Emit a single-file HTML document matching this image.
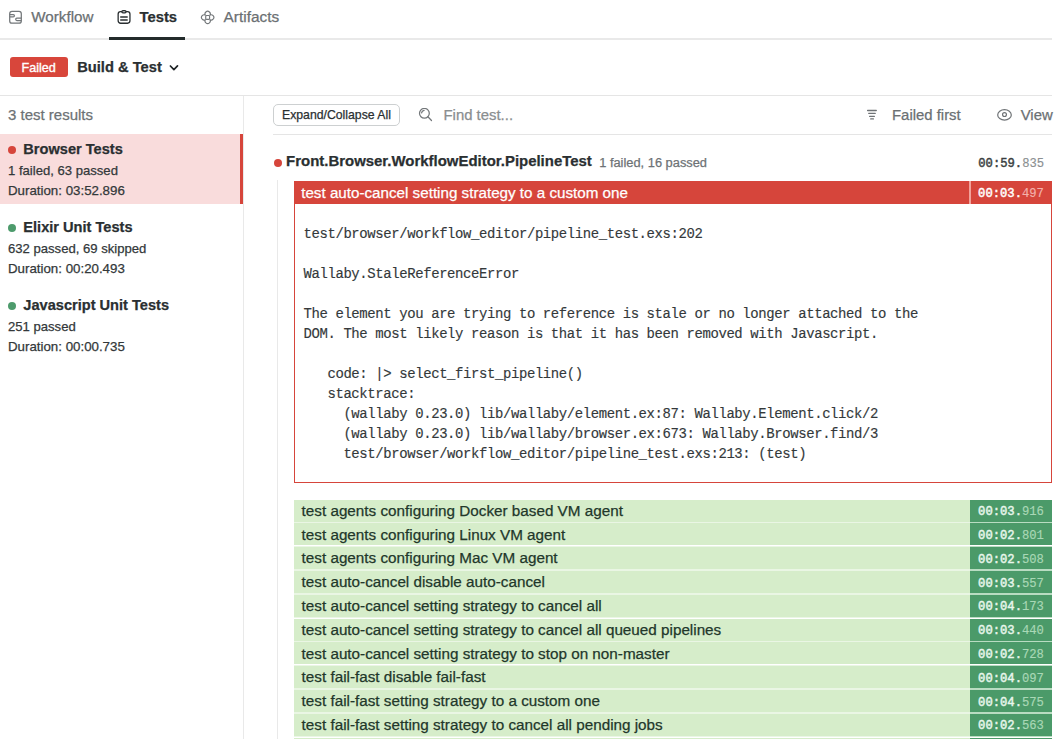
<!DOCTYPE html>
<html><head><meta charset="utf-8"><style>
html,body{margin:0;padding:0;background:#fff;width:1056px;height:739px;overflow:hidden;position:relative}
.r{position:absolute}
.t{position:absolute;line-height:1;white-space:nowrap}
.s{font-family:"Liberation Sans", sans-serif}
.m{font-family:"Liberation Mono", monospace}
.b{font-weight:700}
.s{-webkit-text-stroke:0.25px currentColor}
.m{-webkit-text-stroke:0.15px currentColor}
.dot{border-radius:50%}
</style></head><body>
<div class="r" style="left:0.00px;top:38.00px;width:1052.00px;height:1.50px;background:#e9e9e9"></div>
<div class="r" style="left:109.00px;top:36.50px;width:76.00px;height:3.00px;background:#232b2b"></div>
<svg class="r" style="left:8px;top:10px" width="15" height="15" viewBox="0 0 15 15" fill="none" stroke="#73777a" stroke-width="1.25">
<rect x="1.7" y="1.4" width="11.6" height="11.8" rx="2.3"/>
<path d="M1.7 4.5 H5.25 A1.15 1.15 0 0 1 5.25 6.8 H1.7"/><path d="M13.3 8.15 H8.87 A1.17 1.17 0 0 0 8.87 10.5 H13.3"/>
</svg>
<div class="t s" style="left:31.30px;top:9.41px;font-size:15.2px;color:#6b7073;">Workflow</div>
<svg class="r" style="left:116px;top:9px" width="16" height="16" viewBox="0 0 16 16" fill="none" stroke="#2a2f31" stroke-width="1.3">
<rect x="2.15" y="2.65" width="11.8" height="11.6" rx="2.4"/>
<rect x="5.85" y="1.65" width="4.2" height="2.2" rx="1.1" fill="#cfd1d2"/>
<path d="M4.2 7.95 H11.7 M4.2 10.95 H11.7" stroke-width="1.5"/>
</svg>
<div class="t s b" style="left:139.50px;top:10.41px;font-size:14.8px;color:#2a2f31;">Tests</div>
<svg class="r" style="left:200px;top:10px" width="16" height="16" viewBox="0 0 16 16" fill="none" stroke="#73777a" stroke-width="1.15">
<path d="M5.6 5.5 A2.6 2.6 0 1 1 9.7 5.5 M9.7 9.4 A2.6 2.6 0 1 1 5.6 9.4 M5.7 9.5 A2.6 2.6 0 1 1 5.7 5.4 M9.6 5.4 A2.6 2.6 0 1 1 9.6 9.5"/><rect x="5.7" y="5.5" width="3.9" height="3.9" rx="0.9"/>
</svg>
<div class="t s" style="left:223.60px;top:9.41px;font-size:15.4px;color:#6b7073;">Artifacts</div>
<div class="r" style="left:9.50px;top:57.30px;width:58.70px;height:20.00px;background:#d8463b;border-radius:3px"></div>
<div class="t s" style="left:21.50px;top:62.01px;font-size:12.6px;color:#ffffff;-webkit-text-stroke:0.35px #fff">Failed</div>
<div class="t s b" style="left:77.20px;top:60.30px;font-size:14.7px;color:#2a2f31;">Build &amp; Test</div>
<svg class="r" style="left:168px;top:63px" width="12" height="9" viewBox="0 0 12 9" fill="none" stroke="#1f2426" stroke-width="1.7" stroke-linecap="round" stroke-linejoin="round"><path d="M2.4 3.0 L5.9 6.6 L9.5 2.9"/></svg>
<div class="r" style="left:0.00px;top:95.00px;width:1052.00px;height:1.00px;background:#e5e5e5"></div>
<div class="r" style="left:243.00px;top:96.00px;width:1.00px;height:643.00px;background:#e9e9e9"></div>
<div class="t s" style="left:8.00px;top:106.60px;font-size:15.0px;color:#6d7275;">3 test results</div>
<div class="r" style="left:0.00px;top:133.50px;width:240.00px;height:70.00px;background:#f9dcdc"></div>
<div class="r" style="left:240.00px;top:133.50px;width:3.00px;height:70.00px;background:#d6453b"></div>
<div class="r dot" style="left:8.0px;top:146.40px;width:8px;height:8px;background:#d6453b"></div>
<div class="t s b" style="left:23.30px;top:142.00px;font-size:14.6px;color:#2a2f31;">Browser Tests</div>
<div class="t s" style="left:8.00px;top:164.00px;font-size:13.1px;color:#33383a;">1 failed, 63 passed</div>
<div class="t s" style="left:8.00px;top:184.01px;font-size:13.3px;color:#33383a;">Duration: 03:52.896</div>
<div class="r dot" style="left:8.0px;top:224.20px;width:8px;height:8px;background:#4d9b6c"></div>
<div class="t s b" style="left:23.30px;top:220.00px;font-size:14.6px;color:#2a2f31;">Elixir Unit Tests</div>
<div class="t s" style="left:8.00px;top:242.00px;font-size:13.1px;color:#33383a;">632 passed, 69 skipped</div>
<div class="t s" style="left:8.00px;top:261.60px;font-size:13.3px;color:#33383a;">Duration: 00:20.493</div>
<div class="r dot" style="left:8.0px;top:301.90px;width:8px;height:8px;background:#4d9b6c"></div>
<div class="t s b" style="left:23.30px;top:298.00px;font-size:14.6px;color:#2a2f31;">Javascript Unit Tests</div>
<div class="t s" style="left:8.00px;top:320.00px;font-size:13.1px;color:#33383a;">251 passed</div>
<div class="t s" style="left:8.00px;top:340.01px;font-size:13.3px;color:#33383a;">Duration: 00:00.735</div>
<div class="r" style="left:273.20px;top:104.00px;width:126.40px;height:22.00px;border:1px solid #cdd0d1;border-radius:5px;box-sizing:border-box;background:#fff"></div>
<div class="t s" style="left:282.00px;top:109.21px;font-size:12.25px;color:#2a2f31;">Expand/Collapse All</div>
<svg class="r" style="left:418px;top:108px" width="15" height="15" viewBox="0 0 15 15" fill="none" stroke="#73777a" stroke-width="1.25" stroke-linecap="round">
<circle cx="6.4" cy="5.3" r="4.9"/><path d="M9.9 8.8 L13.5 12.5"/><path d="M3.6 4.9 A2.9 2.9 0 0 1 6.1 2.3"/>
</svg>
<div class="t s" style="left:443.50px;top:107.51px;font-size:14.9px;color:#8a8e90;">Find test...</div>
<svg class="r" style="left:866px;top:109px" width="12" height="12" viewBox="0 0 12 12" fill="none" stroke="#6f7376" stroke-width="1.3" stroke-linecap="round">
<path d="M1.6 1.5 H10.3 M2.7 4.3 H9.3 M3.6 7.3 H8.4 M4.7 9.9 H7.4"/>
</svg>
<div class="t s" style="left:892.00px;top:107.90px;font-size:14.9px;color:#6b7073;">Failed first</div>
<svg class="r" style="left:996px;top:108px" width="17" height="14" viewBox="0 0 17 14" fill="none" stroke="#6f7376" stroke-width="1.2">
<ellipse cx="8.5" cy="6.9" rx="6.8" ry="5.2"/><circle cx="8.5" cy="6.55" r="1.95"/>
</svg>
<div class="t s" style="left:1020.70px;top:107.90px;font-size:14.9px;color:#6b7073;">View</div>
<div class="r" style="left:273.00px;top:133.60px;width:779.00px;height:1.00px;background:#e5e5e5"></div>
<div class="r dot" style="left:274.1px;top:158.8px;width:8px;height:8px;background:#d6453b"></div>
<div class="t s b" style="left:286.10px;top:154.21px;font-size:14.95px;color:#2a2f31;">Front.Browser.WorkflowEditor.PipelineTest</div>
<div class="t s" style="left:599.20px;top:156.71px;font-size:12.85px;color:#6d7275;">1 failed, 16 passed</div>
<div class="t m" style="left:978.30px;top:157.60px;font-size:12.2px;color:#3a3f41;"><span style="-webkit-text-stroke:0.45px #3a3f41">00:59.</span><span style="color:#8b8f91">835</span></div>
<div class="r" style="left:277.30px;top:180.00px;width:1.00px;height:559.00px;background:#e9e9e9"></div>
<div class="r" style="left:293.80px;top:181.30px;width:758.20px;height:22.40px;background:#d6453b"></div>
<div class="r" style="left:969.20px;top:181.30px;width:1.60px;height:22.40px;background:#f2a29b"></div>
<div class="t s" style="left:301.20px;top:185.01px;font-size:15.2px;color:#ffffff;">test auto-cancel setting strategy to a custom one</div>
<div class="t m" style="left:978.10px;top:188.22px;font-size:12.2px;color:#ffffff;"><span style="-webkit-text-stroke:0.45px #fff">00:03.</span><span style="color:#f3b1ab">497</span></div>
<div class="r" style="left:293.80px;top:203.70px;width:758.20px;height:279.30px;border:1.7px solid #d6453b;border-top:0;box-sizing:border-box;background:#fff"></div>
<div class="t m" style="left:303.50px;top:228.01px;font-size:13.95px;color:#34393b;white-space:pre;letter-spacing:-0.385px">test/browser/workflow_editor/pipeline_test.exs:202</div>
<div class="t m" style="left:303.50px;top:268.01px;font-size:13.95px;color:#34393b;white-space:pre;letter-spacing:-0.385px">Wallaby.StaleReferenceError</div>
<div class="t m" style="left:303.50px;top:308.01px;font-size:13.95px;color:#34393b;white-space:pre;letter-spacing:-0.385px">The element you are trying to reference is stale or no longer attached to the</div>
<div class="t m" style="left:303.50px;top:328.01px;font-size:13.95px;color:#34393b;white-space:pre;letter-spacing:-0.385px">DOM. The most likely reason is that it has been removed with Javascript.</div>
<div class="t m" style="left:303.50px;top:368.01px;font-size:13.95px;color:#34393b;white-space:pre;letter-spacing:-0.385px">   code: |&gt; select_first_pipeline()</div>
<div class="t m" style="left:303.50px;top:388.01px;font-size:13.95px;color:#34393b;white-space:pre;letter-spacing:-0.385px">   stacktrace:</div>
<div class="t m" style="left:303.50px;top:408.01px;font-size:13.95px;color:#34393b;white-space:pre;letter-spacing:-0.385px">     (wallaby 0.23.0) lib/wallaby/element.ex:87: Wallaby.Element.click/2</div>
<div class="t m" style="left:303.50px;top:428.01px;font-size:13.95px;color:#34393b;white-space:pre;letter-spacing:-0.385px">     (wallaby 0.23.0) lib/wallaby/browser.ex:673: Wallaby.Browser.find/3</div>
<div class="t m" style="left:303.50px;top:448.01px;font-size:13.95px;color:#34393b;white-space:pre;letter-spacing:-0.385px">     test/browser/workflow_editor/pipeline_test.exs:213: (test)</div>
<div class="r" style="left:294.00px;top:499.50px;width:676.40px;height:22.20px;background:#d6edca"></div>
<div class="r" style="left:970.40px;top:499.50px;width:81.60px;height:22.20px;background:#4b9a69"></div>
<div class="r" style="left:970.40px;top:521.70px;width:81.60px;height:1.60px;background:#b9dcc2"></div>
<div class="t s" style="left:301.60px;top:502.80px;font-size:15.25px;color:#22372a;">test agents configuring Docker based VM agent</div>
<div class="t m" style="left:978.10px;top:506.22px;font-size:12.2px;color:#e8f6ec;"><span style="-webkit-text-stroke:0.45px #e8f6ec">00:03.</span><span style="color:#a9d8b6">916</span></div>
<div class="r" style="left:294.00px;top:521.70px;width:676.40px;height:1.60px;background:#eaf6e4"></div>
<div class="r" style="left:294.00px;top:523.30px;width:676.40px;height:22.20px;background:#d6edca"></div>
<div class="r" style="left:970.40px;top:523.30px;width:81.60px;height:22.20px;background:#4b9a69"></div>
<div class="r" style="left:970.40px;top:545.50px;width:81.60px;height:1.60px;background:#b9dcc2"></div>
<div class="t s" style="left:301.60px;top:526.61px;font-size:15.25px;color:#22372a;">test agents configuring Linux VM agent</div>
<div class="t m" style="left:978.10px;top:530.01px;font-size:12.2px;color:#e8f6ec;"><span style="-webkit-text-stroke:0.45px #e8f6ec">00:02.</span><span style="color:#a9d8b6">801</span></div>
<div class="r" style="left:294.00px;top:545.50px;width:676.40px;height:1.60px;background:#eaf6e4"></div>
<div class="r" style="left:294.00px;top:547.10px;width:676.40px;height:22.20px;background:#d6edca"></div>
<div class="r" style="left:970.40px;top:547.10px;width:81.60px;height:22.20px;background:#4b9a69"></div>
<div class="r" style="left:970.40px;top:569.30px;width:81.60px;height:1.60px;background:#b9dcc2"></div>
<div class="t s" style="left:301.60px;top:550.40px;font-size:15.25px;color:#22372a;">test agents configuring Mac VM agent</div>
<div class="t m" style="left:978.10px;top:553.81px;font-size:12.2px;color:#e8f6ec;"><span style="-webkit-text-stroke:0.45px #e8f6ec">00:02.</span><span style="color:#a9d8b6">508</span></div>
<div class="r" style="left:294.00px;top:569.30px;width:676.40px;height:1.60px;background:#eaf6e4"></div>
<div class="r" style="left:294.00px;top:570.90px;width:676.40px;height:22.20px;background:#d6edca"></div>
<div class="r" style="left:970.40px;top:570.90px;width:81.60px;height:22.20px;background:#4b9a69"></div>
<div class="r" style="left:970.40px;top:593.10px;width:81.60px;height:1.60px;background:#b9dcc2"></div>
<div class="t s" style="left:301.60px;top:574.21px;font-size:15.25px;color:#22372a;">test auto-cancel disable auto-cancel</div>
<div class="t m" style="left:978.10px;top:577.60px;font-size:12.2px;color:#e8f6ec;"><span style="-webkit-text-stroke:0.45px #e8f6ec">00:03.</span><span style="color:#a9d8b6">557</span></div>
<div class="r" style="left:294.00px;top:593.10px;width:676.40px;height:1.60px;background:#eaf6e4"></div>
<div class="r" style="left:294.00px;top:594.70px;width:676.40px;height:22.20px;background:#d6edca"></div>
<div class="r" style="left:970.40px;top:594.70px;width:81.60px;height:22.20px;background:#4b9a69"></div>
<div class="r" style="left:970.40px;top:616.90px;width:81.60px;height:1.60px;background:#b9dcc2"></div>
<div class="t s" style="left:301.60px;top:598.01px;font-size:15.25px;color:#22372a;">test auto-cancel setting strategy to cancel all</div>
<div class="t m" style="left:978.10px;top:601.41px;font-size:12.2px;color:#e8f6ec;"><span style="-webkit-text-stroke:0.45px #e8f6ec">00:04.</span><span style="color:#a9d8b6">173</span></div>
<div class="r" style="left:294.00px;top:616.90px;width:676.40px;height:1.60px;background:#eaf6e4"></div>
<div class="r" style="left:294.00px;top:618.50px;width:676.40px;height:22.20px;background:#d6edca"></div>
<div class="r" style="left:970.40px;top:618.50px;width:81.60px;height:22.20px;background:#4b9a69"></div>
<div class="r" style="left:970.40px;top:640.70px;width:81.60px;height:1.60px;background:#b9dcc2"></div>
<div class="t s" style="left:301.60px;top:621.80px;font-size:15.25px;color:#22372a;">test auto-cancel setting strategy to cancel all queued pipelines</div>
<div class="t m" style="left:978.10px;top:625.22px;font-size:12.2px;color:#e8f6ec;"><span style="-webkit-text-stroke:0.45px #e8f6ec">00:03.</span><span style="color:#a9d8b6">440</span></div>
<div class="r" style="left:294.00px;top:640.70px;width:676.40px;height:1.60px;background:#eaf6e4"></div>
<div class="r" style="left:294.00px;top:642.30px;width:676.40px;height:22.20px;background:#d6edca"></div>
<div class="r" style="left:970.40px;top:642.30px;width:81.60px;height:22.20px;background:#4b9a69"></div>
<div class="r" style="left:970.40px;top:664.50px;width:81.60px;height:1.60px;background:#b9dcc2"></div>
<div class="t s" style="left:301.60px;top:645.61px;font-size:15.25px;color:#22372a;">test auto-cancel setting strategy to stop on non-master</div>
<div class="t m" style="left:978.10px;top:649.01px;font-size:12.2px;color:#e8f6ec;"><span style="-webkit-text-stroke:0.45px #e8f6ec">00:02.</span><span style="color:#a9d8b6">728</span></div>
<div class="r" style="left:294.00px;top:664.50px;width:676.40px;height:1.60px;background:#eaf6e4"></div>
<div class="r" style="left:294.00px;top:666.10px;width:676.40px;height:22.20px;background:#d6edca"></div>
<div class="r" style="left:970.40px;top:666.10px;width:81.60px;height:22.20px;background:#4b9a69"></div>
<div class="r" style="left:970.40px;top:688.30px;width:81.60px;height:1.60px;background:#b9dcc2"></div>
<div class="t s" style="left:301.60px;top:669.40px;font-size:15.25px;color:#22372a;">test fail-fast disable fail-fast</div>
<div class="t m" style="left:978.10px;top:672.81px;font-size:12.2px;color:#e8f6ec;"><span style="-webkit-text-stroke:0.45px #e8f6ec">00:04.</span><span style="color:#a9d8b6">097</span></div>
<div class="r" style="left:294.00px;top:688.30px;width:676.40px;height:1.60px;background:#eaf6e4"></div>
<div class="r" style="left:294.00px;top:689.90px;width:676.40px;height:22.20px;background:#d6edca"></div>
<div class="r" style="left:970.40px;top:689.90px;width:81.60px;height:22.20px;background:#4b9a69"></div>
<div class="r" style="left:970.40px;top:712.10px;width:81.60px;height:1.60px;background:#b9dcc2"></div>
<div class="t s" style="left:301.60px;top:693.21px;font-size:15.25px;color:#22372a;">test fail-fast setting strategy to a custom one</div>
<div class="t m" style="left:978.10px;top:696.60px;font-size:12.2px;color:#e8f6ec;"><span style="-webkit-text-stroke:0.45px #e8f6ec">00:04.</span><span style="color:#a9d8b6">575</span></div>
<div class="r" style="left:294.00px;top:712.10px;width:676.40px;height:1.60px;background:#eaf6e4"></div>
<div class="r" style="left:294.00px;top:713.70px;width:676.40px;height:22.20px;background:#d6edca"></div>
<div class="r" style="left:970.40px;top:713.70px;width:81.60px;height:22.20px;background:#4b9a69"></div>
<div class="r" style="left:970.40px;top:735.90px;width:81.60px;height:1.60px;background:#b9dcc2"></div>
<div class="t s" style="left:301.60px;top:717.01px;font-size:15.25px;color:#22372a;">test fail-fast setting strategy to cancel all pending jobs</div>
<div class="t m" style="left:978.10px;top:720.41px;font-size:12.2px;color:#e8f6ec;"><span style="-webkit-text-stroke:0.45px #e8f6ec">00:02.</span><span style="color:#a9d8b6">563</span></div>
<div class="r" style="left:294.00px;top:735.90px;width:676.40px;height:1.60px;background:#eaf6e4"></div>
<div class="r" style="left:294.00px;top:737.50px;width:676.40px;height:22.20px;background:#d6edca"></div>
<div class="r" style="left:970.40px;top:737.50px;width:81.60px;height:22.20px;background:#4b9a69"></div>
<div class="r" style="left:970.40px;top:759.70px;width:81.60px;height:1.60px;background:#b9dcc2"></div>
<div class="t s" style="left:301.60px;top:740.80px;font-size:15.25px;color:#22372a;">test fail-fast setting strategy to stop on non-master</div>
<div class="t m" style="left:978.10px;top:744.22px;font-size:12.2px;color:#e8f6ec;"><span style="-webkit-text-stroke:0.45px #e8f6ec">00:02.</span><span style="color:#a9d8b6">100</span></div>
<div class="r" style="left:294.00px;top:759.70px;width:676.40px;height:1.60px;background:#eaf6e4"></div>
</body></html>
